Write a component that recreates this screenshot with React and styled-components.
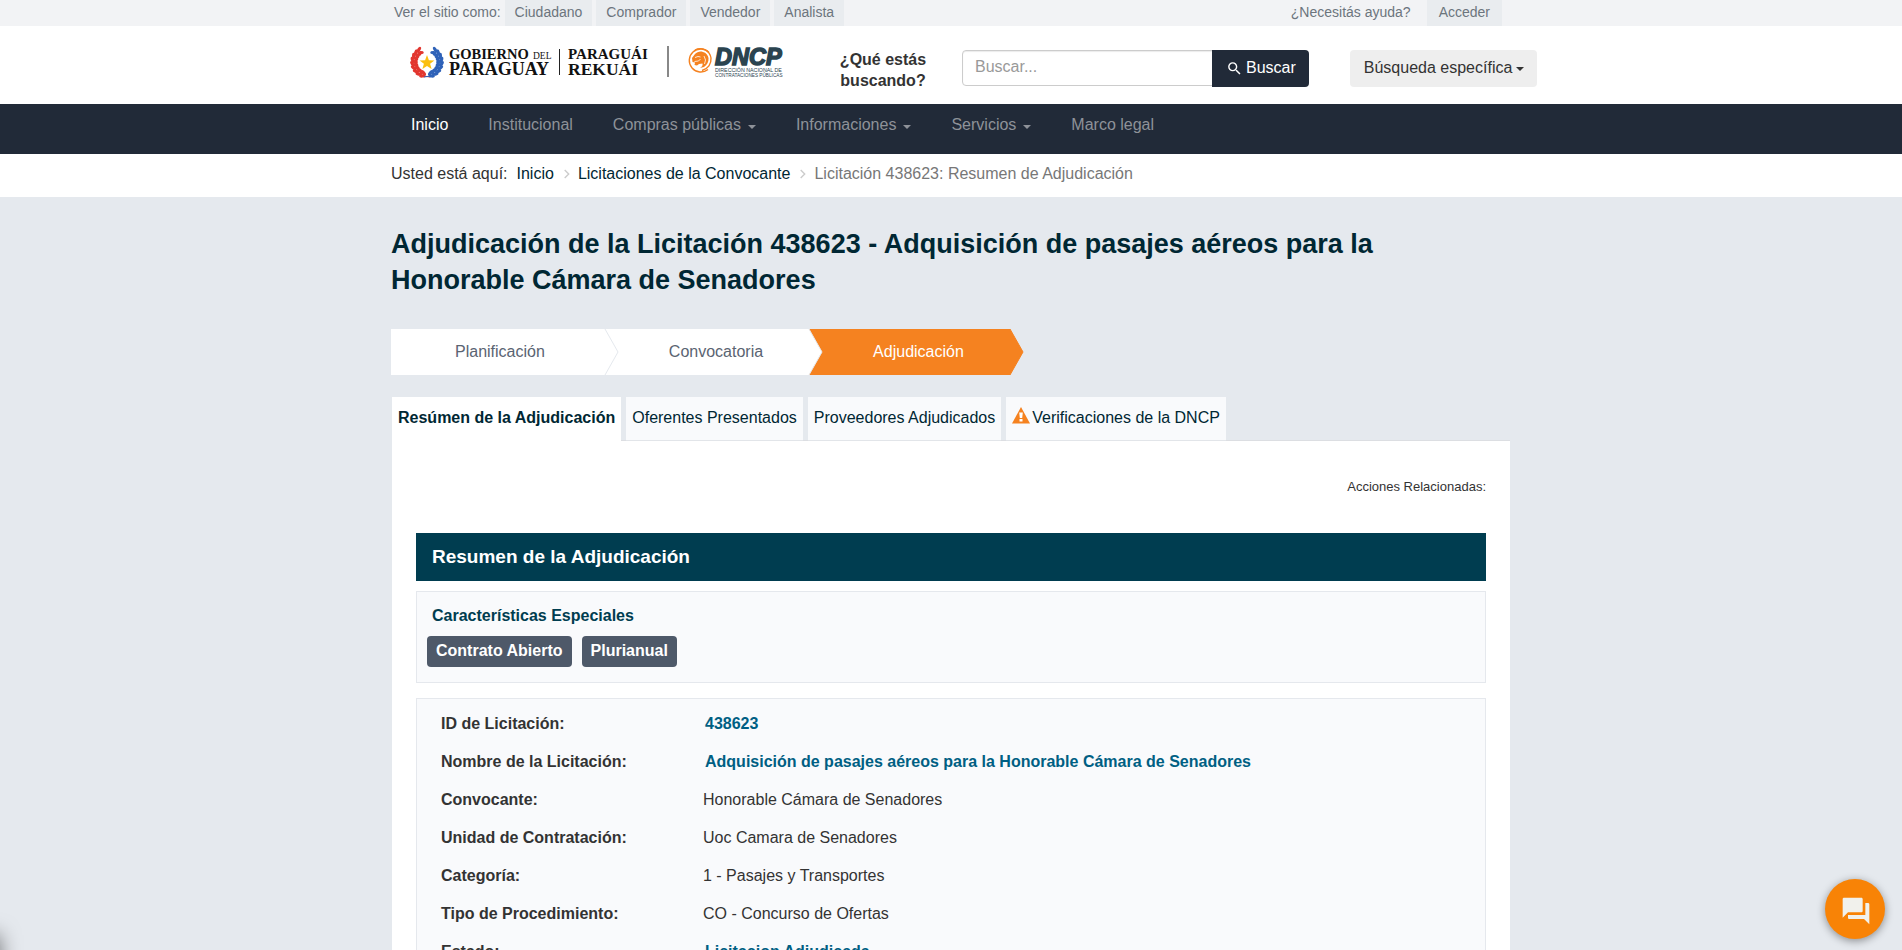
import React from "react";
import styled, { createGlobalStyle } from "styled-components";
import { MdSearch, MdForum } from "react-icons/md";

const c = {
  ink: "#333",
  deep: "#002733",
  petrol: "#003d50",
  link: "#005f83",
  navy: "#212a38",
  page: "#e5e9ee",
  panel: "#f9fafc",
  orange: "#f58220",
  muted: "#6c757d",
};

const GlobalStyle = createGlobalStyle`
  *, *::before, *::after { box-sizing: border-box; }
  html { scrollbar-width: none; }
  body {
    margin: 0;
    background: ${c.page};
    color: ${c.ink};
    font: 16px/24px "Liberation Sans", Arial, sans-serif;
  }
  a { color: inherit; text-decoration: none; }
  button, input { font: inherit; }
`;

const Container = styled.div`
  max-width: 1120px;
  margin: 0 auto;
`;

const TopBar = styled.div`
  background: #f2f3f5;
  color: ${c.muted};
  font-size: 14px;
`;

const TopRow = styled(Container)`
  display: flex;
  align-items: center;
  height: 26px;
  padding: 0 9px 0 3px;
`;

const Roles = styled.nav`
  display: flex;
  gap: 4px;
`;

const TopLink = styled.a`
  height: 26px;
  padding: 0 ${(p) => p.$pad}px;
  background: ${(p) => (p.$filled ? "#e9ecef" : "transparent")};
`;

const Session = styled.div`
  display: flex;
  margin-left: auto;
`;

const Header = styled.header`
  background: #fff;
`;

const HeaderRow = styled.div`
  display: flex;
  align-items: flex-start;
  max-width: 1172px;
  min-height: 78px;
  margin: 0 auto;
  padding: 24px 0 0 45px;
`;

const Logos = styled.a`
  display: flex;
  margin-top: -8px;
`;

const SearchForm = styled.form`
  display: flex;
  align-items: flex-start;
  margin: 0 41px;
`;

const SearchLabel = styled.label`
  width: 104px;
  margin: -1px 27px 0 0;
  font-weight: bold;
  line-height: 21px;
  text-align: center;
`;

const SearchInput = styled.input`
  width: 251px;
  height: 36px;
  padding: 0 12px 2px;
  border: 1px solid #ccc;
  border-radius: 4px 0 0 4px;
  box-shadow: inset 0 1px 1px rgba(0, 0, 0, 0.08);
  &::placeholder { color: #999; opacity: 1; }
`;

const Button = styled.button`
  display: flex;
  align-items: center;
  height: 37px;
  padding: 0 13px 2px 14px;
  border: 0;
  border-radius: 4px;
  background: #eee;
  color: ${c.ink};
  white-space: nowrap;
`;

const SearchButton = styled(Button)`
  gap: 3px;
  margin-left: -1px;
  border-radius: 0 4px 4px 0;
  background: ${c.navy};
  color: #fff;
  svg { margin-top: 2px; }
`;

const Caret = styled.span`
  display: inline-block;
  margin-top: 2px;
  margin-left: ${(p) => p.$gap}px;
  border: 4px solid transparent;
  border-top-color: currentColor;
  border-bottom: 0;
  vertical-align: middle;
`;

const NavBar = styled.nav`
  background: ${c.navy};
`;

const NavRow = styled(Container)`
  display: flex;
  gap: 40px;
  min-height: 50px;
  padding: 9px 20px 8px;
`;

const NavLink = styled.a`
  color: ${(p) => (p.$active ? "#fff" : "#8e9299")};
`;

const Crumbs = styled.nav`
  background: #fff;
`;

const CrumbRow = styled(Container)`
  display: flex;
  min-height: 43px;
  padding-top: 8px;
`;

const CrumbLink = styled.a`
  color: ${c.deep};
`;

const CrumbLead = styled.span`
  margin-right: 9px;
`;

const CrumbCurrent = styled.span`
  color: #777;
`;

const Chevron = styled.svg`
  width: 6px;
  height: 10px;
  margin: 7px 8px 0 10px;
`;

const Title = styled.h1`
  margin: 0;
  padding: 29px 90px 0 0;
  color: ${c.deep};
  font-size: 27px;
  line-height: 36px;
`;

const Steps = styled.nav`
  display: flex;
  margin: 31px 0 22px;
`;

const Step = styled.a`
  position: relative;
  z-index: ${(p) => p.$z};
  height: 46px;
  padding: 0 ${(p) => p.$right}px 0 64px;
  background: ${(p) => (p.$active ? c.orange : "#fff")};
  color: ${(p) => (p.$active ? "#fff" : "#5a6472")};
  line-height: 46px;
`;

const StepTip = styled.svg`
  position: absolute;
  top: 0;
  left: 100%;
  width: 14px;
  height: 46px;
  overflow: visible;
`;

const Tabs = styled.div`
  display: flex;
  gap: 5px;
  padding-left: 1px;
`;

const Tab = styled.button`
  display: flex;
  align-items: center;
  gap: 2px;
  height: 44px;
  margin-bottom: ${(p) => (p.$active ? "-1px" : "0")};
  padding: 0 6px 2px;
  border: 0;
  border-bottom: 1px solid ${(p) => (p.$active ? "#fff" : "#e2e5e9")};
  background: ${(p) => (p.$active ? "#fff" : c.panel)};
  color: ${c.deep};
  font-weight: ${(p) => (p.$active ? "bold" : "normal")};
  white-space: nowrap;
  svg { margin-bottom: 4px; }
`;

const Panel = styled.main`
  margin: -1px 1px 0;
  padding: 37px 24px 24px;
  border-top: 1px solid #dcdee2;
  background: #fff;
`;

const Actions = styled.p`
  margin: 0 0 37px;
  font-size: 13px;
  line-height: 18px;
  text-align: right;
`;

const SectionTitle = styled.h2`
  margin: 0 0 10px;
  padding: 0 16px;
  background: ${c.petrol};
  color: #fff;
  font-size: 19px;
  line-height: 48px;
`;

const Box = styled.section`
  margin-bottom: 15px;
  border: 1px solid #e5e8ed;
  background: ${c.panel};
`;

const FeatureBox = styled(Box)`
  padding: 12px 10px 15px;
`;

const FeatureTitle = styled.h3`
  margin: 0 5px 8px;
  color: ${c.petrol};
  font-size: 16px;
  line-height: 24px;
`;

const Badges = styled.div`
  display: flex;
  gap: 10px;
`;

const Badge = styled.span`
  height: 31px;
  padding: 0 9px;
  border-radius: 4px;
  background: #4e5969;
  color: #fff;
  font-weight: bold;
  line-height: 29px;
`;

const Details = styled.dl`
  margin: 0;
  padding: 6px 24px;
`;

const DetailRow = styled.div`
  display: grid;
  grid-template-columns: 262px 1fr;
  line-height: 38px;
`;

const Term = styled.dt`
  font-weight: bold;
`;

const Value = styled.dd`
  margin: 0;
`;

const ValueLink = styled.a`
  padding-left: 2px;
  color: ${c.link};
  font-weight: bold;
`;

const ChatButton = styled.button`
  position: fixed;
  right: 17px;
  bottom: 11px;
  display: flex;
  align-items: center;
  justify-content: center;
  width: 60px;
  height: 60px;
  padding: 4px 0 0 1px;
  border: 0;
  border-radius: 50%;
  background: #f88306;
  color: #f1f1ec;
  box-shadow: 0 2px 8px rgba(0, 0, 0, 0.4);
`;

const DrawerEdge = styled.div`
  position: fixed;
  left: -60px;
  bottom: -25px;
  width: 60px;
  height: 40px;
  box-shadow: 0 0 20px rgba(0, 0, 0, 0.5);
`;

const Leaves = ({ side }) => {
  const angles = [112, 128, 144, 160, 176, 192, 208, 224, 240];
  return (
    <g fill={side === "left" ? "#e2362f" : "#2f62b8"} transform={side === "left" ? undefined : "translate(34 0) scale(-1 1)"}>
      {angles.map((a) => {
        const r = (a * Math.PI) / 180;
        const x = 17 + 13 * Math.cos(r);
        const y = 15 + 13 * Math.sin(r);
        return (
          <g key={a} transform={`translate(${x.toFixed(1)} ${y.toFixed(1)}) rotate(${a + 90})`}>
            <ellipse cx="0" cy="-1.9" rx="3.2" ry="1.6" transform="rotate(-28)" />
            <ellipse cx="0" cy="1.9" rx="3.2" ry="1.6" transform="rotate(28)" />
          </g>
        );
      })}
      <path d="M5 22Q10 29 20 29.500L20 30.500Q9 30 4 22Z" />
    </g>
  );
};

const LogoArt = () => (
  <svg width="380" height="46" viewBox="0 0 380 46" role="img" aria-label="Gobierno del Paraguay y DNCP">
    <g transform="translate(0 5)">
      <Leaves side="left" />
      <Leaves side="right" />
      <path fill="#fbbf10" d="M17 8l1.900 5.200 5.500.2-4.300 3.400 1.500 5.300-4.600-3.100-4.600 3.100 1.500-5.300-4.300-3.400 5.500-.2z" />
    </g>
    <g fill="#111" fontFamily="'Liberation Serif', serif" fontWeight="bold">
      <text x="39" y="17" fontSize="14.500">GOBIERNO</text>
      <text x="123" y="17" fontSize="9.500" fontWeight="normal">DEL</text>
      <text x="39" y="33" fontSize="18">PARAGUAY</text>
      <text x="158" y="17" fontSize="15">PARAGUÁI</text>
      <text x="158" y="33" fontSize="17.500">REKUÁI</text>
    </g>
    <path d="M149.500 7v26" stroke="#222" />
    <path d="M258 4v31" stroke="#888" strokeWidth="2" />
    <g fill="none" stroke={c.orange}>
      <path d="M299 10.500A11.500 11.500 0 1 0 298 27.500" strokeWidth="1.400" />
      <path d="M285 8A11 11 0 0 1 301 16C301.500 22 298 27 292 28.500" strokeWidth="1.400" />
    </g>
    <path
      fill={c.orange}
      d="M282 16l3-4c2-2 5-3 8-2 3 .8 5 3 5.500 6 .4 4-1.500 7-4.500 9l-4 1c2-1 3-3 2.500-4.500l-3.500.5-2 1.500-2.500-.5.5-2.500-2.500-.5z"
    />
    <path d="M285 15.500l3-1 2.500.5M284.500 19.500l4-.5 2-2M294 14l1.500 4-1 4" stroke="#fff" strokeWidth=".8" fill="none" />
    <g fill="#2b4450" fontFamily="'Liberation Sans', Arial, sans-serif">
      <text x="305" y="22.500" fontSize="23.500" fontWeight="bold" fontStyle="italic" stroke="#2b4450" strokeWidth="1.500">DNCP</text>
      <text x="305" y="29.500" fontSize="5.300">DIRECCIÓN NACIONAL DE</text>
      <text x="305" y="34.500" fontSize="4.700">CONTRATACIONES PÚBLICAS</text>
    </g>
  </svg>
);

const WarningIcon = () => (
  <svg width="18" height="17" viewBox="0 0 18 17" aria-hidden="true">
    <path fill={c.orange} d="M9 0l9 16.500H0z" />
    <path fill="#fff" d="M7.200 5.500h3.600l-.6 5.500H7.800zM7.500 12h3v2.500h-3z" />
  </svg>
);

const CrumbChevron = () => (
  <Chevron viewBox="0 0 6 10" aria-hidden="true">
    <path d="M.7 1l4 4-4 4" fill="none" stroke="#ccc" strokeWidth="1.400" />
  </Chevron>
);

const roles = ["Ciudadano", "Comprador", "Vendedor", "Analista"];

const menu = [
  { label: "Inicio", active: true },
  { label: "Institucional" },
  { label: "Compras públicas", drop: true },
  { label: "Informaciones", drop: true },
  { label: "Servicios", drop: true },
  { label: "Marco legal" },
];

const steps = [
  { label: "Planificación", right: 60, z: 3 },
  { label: "Convocatoria", right: 46, z: 2 },
  { label: "Adjudicación", right: 46, z: 1, active: true },
];

const tabs = [
  { label: "Resúmen de la Adjudicación", active: true },
  { label: "Oferentes Presentados" },
  { label: "Proveedores Adjudicados" },
  { label: "Verificaciones de la DNCP", warn: true },
];

const details = [
  { term: "ID de Licitación:", value: "438623", link: true },
  { term: "Nombre de la Licitación:", value: "Adquisición de pasajes aéreos para la Honorable Cámara de Senadores", link: true },
  { term: "Convocante:", value: "Honorable Cámara de Senadores" },
  { term: "Unidad de Contratación:", value: "Uoc Camara de Senadores" },
  { term: "Categoría:", value: "1 - Pasajes y Transportes" },
  { term: "Tipo de Procedimiento:", value: "CO - Concurso de Ofertas" },
  { term: "Estado:", value: "Licitacion Adjudicada", link: true },
];

export default function App() {
  return (
    <>
      <GlobalStyle />
      <TopBar>
        <TopRow>
          <Roles>
            <span>Ver el sitio como:</span>
            {roles.map((r) => (
              <TopLink key={r} href="#" $pad={10} $filled>{r}</TopLink>
            ))}
          </Roles>
          <Session>
            <TopLink href="#" $pad={16}>¿Necesitás ayuda?</TopLink>
            <TopLink href="#" $pad={12} $filled>Acceder</TopLink>
          </Session>
        </TopRow>
      </TopBar>

      <Header>
        <HeaderRow>
          <Logos href="#"><LogoArt /></Logos>
          <SearchForm onSubmit={(e) => e.preventDefault()}>
            <SearchLabel htmlFor="q">¿Qué estás buscando?</SearchLabel>
            <SearchInput id="q" placeholder="Buscar..." />
            <SearchButton type="submit"><MdSearch size={17} />Buscar</SearchButton>
          </SearchForm>
          <Button type="button">Búsqueda específica<Caret $gap={4} /></Button>
        </HeaderRow>
      </Header>

      <NavBar>
        <NavRow>
          {menu.map((m) => (
            <NavLink key={m.label} href="#" $active={m.active}>
              {m.label}
              {m.drop && <Caret $gap={7} />}
            </NavLink>
          ))}
        </NavRow>
      </NavBar>

      <Crumbs aria-label="Ruta">
        <CrumbRow>
          <CrumbLead>Usted está aquí:</CrumbLead>
          <CrumbLink href="#">Inicio</CrumbLink>
          <CrumbChevron />
          <CrumbLink href="#">Licitaciones de la Convocante</CrumbLink>
          <CrumbChevron />
          <CrumbCurrent>Licitación 438623: Resumen de Adjudicación</CrumbCurrent>
        </CrumbRow>
      </Crumbs>

      <Container>
        <Title>
          Adjudicación de la Licitación 438623 - Adquisición de pasajes aéreos para la Honorable Cámara de Senadores
        </Title>

        <Steps aria-label="Etapas">
          {steps.map((s) => (
            <Step key={s.label} href="#" $active={s.active} $right={s.right} $z={s.z}>
              {s.label}
              <StepTip viewBox="0 0 14 46" aria-hidden="true">
                <path d="M0 0l13 23L0 46z" fill={s.active ? c.orange : "#fff"} />
                <path d="M0 0l13 23L0 46" fill="none" stroke={s.active ? c.orange : "#e5e9ee"} />
              </StepTip>
            </Step>
          ))}
        </Steps>

        <Tabs role="tablist">
          {tabs.map((t) => (
            <Tab key={t.label} type="button" role="tab" aria-selected={!!t.active} $active={t.active}>
              {t.warn && <WarningIcon />}
              {t.label}
            </Tab>
          ))}
        </Tabs>

        <Panel>
          <Actions>Acciones Relacionadas:</Actions>
          <SectionTitle>Resumen de la Adjudicación</SectionTitle>
          <FeatureBox>
            <FeatureTitle>Características Especiales</FeatureTitle>
            <Badges>
              <Badge>Contrato Abierto</Badge>
              <Badge>Plurianual</Badge>
            </Badges>
          </FeatureBox>
          <Box>
            <Details>
              {details.map((d) => (
                <DetailRow key={d.term}>
                  <Term>{d.term}</Term>
                  <Value>{d.link ? <ValueLink href="#">{d.value}</ValueLink> : d.value}</Value>
                </DetailRow>
              ))}
            </Details>
          </Box>
        </Panel>
      </Container>

      <DrawerEdge />
      <ChatButton type="button" aria-label="Abrir chat"><MdForum size={32} /></ChatButton>
    </>
  );
}
